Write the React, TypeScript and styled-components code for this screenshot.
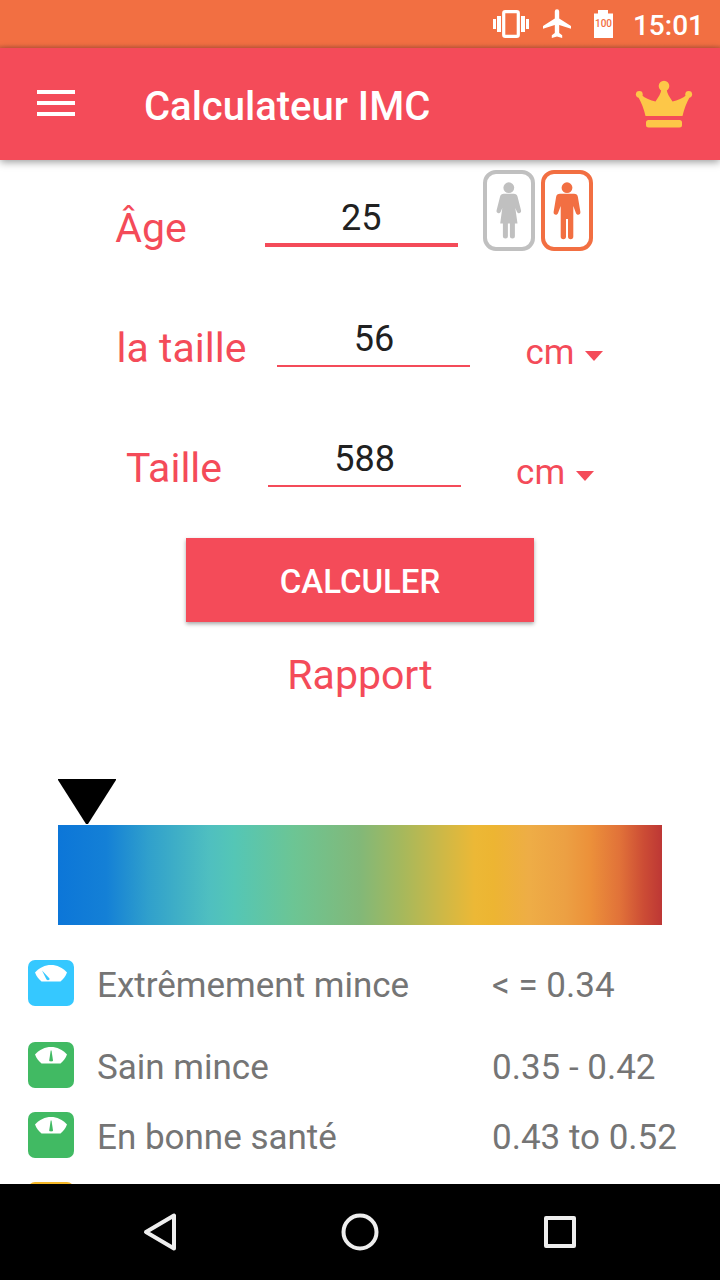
import React, { useId, useState } from "react";
import styled, { createGlobalStyle } from "styled-components";

const RED = "#f44b59";
const ORANGE = "#f26f42";
const GREY = "#c0c0c0";

const GlobalStyle = createGlobalStyle`
  * { box-sizing: border-box; }
  body { margin: 0; background: #fff; font-family: Roboto, "Noto Sans", sans-serif; }
  button, input, select { font-family: inherit; }
  svg { display: block; }
`;

const Screen = styled.div`
  display: flex;
  flex-direction: column;
  height: 100vh;
  overflow: hidden;
`;

const StatusBar = styled.div`
  display: flex;
  align-items: center;
  justify-content: flex-end;
  flex: none;
  height: 48px;
  padding-right: 16px;
  background: linear-gradient(to bottom, ${ORANGE} 92%, #d9623f 100%);
  color: #fff;
`;

const StatusIcons = styled.div`
  display: flex;
  align-items: center;
  gap: 12px;
  margin-right: 18px;
`;

const Clock = styled.time`
  font-size: 28px;
  line-height: 48px;
  font-weight: 500;
  padding-top: 4px;
`;

const AppBar = styled.header`
  position: relative;
  z-index: 1;
  display: flex;
  align-items: center;
  flex: none;
  height: 112px;
  padding: 0 27px 0 36px;
  background: ${RED};
  color: #fff;
  box-shadow: 0 2px 8px rgba(0, 0, 0, 0.4);
`;

const IconButton = styled.button`
  display: flex;
  padding: 0;
  border: 0;
  background: none;
  cursor: pointer;
`;

const AppTitle = styled.h1`
  flex: 1;
  margin: 0;
  padding: 6px 0 0 68px;
  font-size: 40px;
  line-height: 48px;
  font-weight: 500;
`;

const Content = styled.main`
  flex: 1;
  min-height: 0;
  overflow-y: auto;
  scrollbar-width: none;
`;

const Form = styled.form`
  display: flex;
  flex-direction: column;
  align-items: center;
`;

const FieldRow = styled.div<{ $shift?: number }>`
  display: flex;
  justify-content: center;
  align-items: flex-start;
  width: 100%;
  height: 120px;
  padding-right: ${(p) => p.$shift ?? 0}px;
`;

const FieldLabel = styled.label<{ $gap: number }>`
  margin: 44px ${(p) => p.$gap}px 0 0;
  font-size: 41px;
  line-height: 48px;
  color: ${RED};
`;

const NumberInput = styled.input<{ $active?: boolean }>`
  width: 193px;
  height: 54px;
  margin-top: 33px;
  padding: 0;
  border: 0;
  border-bottom: ${(p) => (p.$active ? 4 : 2)}px solid ${RED};
  border-radius: 0;
  outline: 0;
  background: none;
  color: #212121;
  font-size: 36px;
  line-height: 42px;
  text-align: center;
`;

const UnitPicker = styled.div<{ $gap: number }>`
  position: relative;
  width: 78px;
  margin: 51px 0 0 ${(p) => p.$gap}px;
`;

const UnitSelect = styled.select`
  appearance: none;
  display: block;
  width: 100%;
  height: 44px;
  padding: 0;
  border: 0;
  outline: 0;
  background: none;
  color: ${RED};
  font-size: 35px;
  line-height: 42px;
`;

const Caret = styled.svg`
  position: absolute;
  right: 0;
  top: 20px;
  pointer-events: none;
`;

const GenderGroup = styled.div`
  display: flex;
  gap: 6px;
  margin: 10px 0 0 25px;
`;

const GenderOption = styled.label<{ $selected: boolean }>`
  position: relative;
  display: flex;
  align-items: center;
  justify-content: center;
  width: 52px;
  height: 81px;
  border: 4px solid;
  border-radius: 13px;
  color: ${(p) => (p.$selected ? ORANGE : GREY)};
  cursor: pointer;
`;

const HiddenRadio = styled.input`
  position: absolute;
  inset: 0;
  margin: 0;
  opacity: 0;
`;

const SubmitButton = styled.button`
  width: 348px;
  max-width: 100%;
  height: 84px;
  margin-top: 18px;
  padding: 2px 0 0;
  border: 0;
  background: ${RED};
  color: #fff;
  font-size: 33px;
  font-weight: 500;
  text-transform: uppercase;
  box-shadow: 0 2px 4px rgba(0, 0, 0, 0.35);
  cursor: pointer;
`;

const ReportTitle = styled.h2`
  margin: 29px 0 0;
  font-size: 41px;
  line-height: 48px;
  font-weight: 400;
  color: ${RED};
  text-align: center;
`;

const Gauge = styled.div`
  margin: 80px 58px 0;
`;

const GaugeBar = styled.div`
  height: 100px;
  background: linear-gradient(
    to right,
    #0c76d8 0%,
    #1480d6 8%,
    #30a0cc 15%,
    #4fbfc0 25%,
    #54c6b6 29%,
    #6cc594 39%,
    #82b878 50%,
    #a6b85c 57%,
    #d0b845 64%,
    #ecb836 69%,
    #edb532 72%,
    #eead46 78%,
    #eca043 84%,
    #ec913a 88%,
    #e17239 93%,
    #cc4c35 97%,
    #bd3735 100%
  );
`;

const Ranges = styled.table`
  width: 100%;
  margin-top: 11px;
  border-collapse: collapse;
  table-layout: fixed;
  color: #757575;
  font-size: 35px;
  line-height: 42px;
`;

const RangeRow = styled.tr<{ $tall?: boolean }>`
  height: ${(p) => (p.$tall ? 94 : 70)}px;
`;

const IconCell = styled.td`
  width: 97px;
  padding: 0 0 0 28px;
`;

const NameCell = styled.th`
  width: 395px;
  padding: 6px 0 0;
  font-weight: 400;
  text-align: left;
`;

const ValueCell = styled.td`
  padding: 6px 0 0;
  white-space: nowrap;
`;

const NavBar = styled.nav`
  display: flex;
  align-items: center;
  justify-content: center;
  gap: 160px;
  flex: none;
  height: 96px;
  background: #000;
`;

const VibrateIcon = () => (
  <svg width="36" height="28" viewBox="0 0 36 28" fill="#fff" aria-hidden="true">
    <path d="M0 9h3v10H0zM4 6h4v16H4zM28 6h4v16h-4zM33 9h3v10h-3z" />
    <rect x="10.700" y="1.700" width="14.600" height="24.600" rx="1.600" fill="none" stroke="#fff" strokeWidth="3.200" />
  </svg>
);

const PlaneIcon = () => (
  <svg width="34" height="34" viewBox="0 0 34 34" fill="#fff" aria-hidden="true">
    <path d="M30 21.800V19L18.200 11.600V4.500a2.200 2.200 0 0 0-4.400 0v7.100L2 19v2.800l11.800-3.700V26l-3 2.200V31l5.200-1.500 5.200 1.500v-2.800l-3-2.200v-7.900z" />
  </svg>
);

const BatteryIcon = () => (
  <svg width="28" height="30" viewBox="0 0 28 30" aria-hidden="true">
    <path d="M7 4.500h4V1h10v3.500h5V29H7z" fill="#fff" />
    <text x="16.500" y="18" textAnchor="middle" fontFamily="Roboto, sans-serif" fontWeight="500" fontSize="10" fill={ORANGE}>
      100
    </text>
  </svg>
);

const MenuIcon = () => (
  <svg width="40" height="30" viewBox="0 0 40 30" fill="#fff" aria-hidden="true">
    <path d="M1 1h38v4H1zM1 12h38v4H1zM1 23h38v4H1z" />
  </svg>
);

const CrownIcon = () => (
  <svg width="58" height="48" viewBox="0 0 58 48" fill="#fdc748" aria-hidden="true">
    <circle cx="29" cy="6" r="5.300" />
    <circle cx="4.300" cy="14.300" r="3.400" />
    <circle cx="53.700" cy="14.300" r="3.400" />
    <path d="M26.500 9h5c.8 5 3 8 6 12.500 5-1 10.500-3.200 14-6.500l3.500 1.500c-3.500 6-6 13-7.500 19.500h-37C9 29.500 6.500 22.500 3 16.500L6.500 15c3.500 3.300 9 5.500 14 6.500 3-4.500 5.200-7.500 6-12.500z" />
    <rect x="11" y="40" width="36" height="7.500" rx="2.500" />
  </svg>
);

const WomanIcon = () => (
  <svg width="28" height="58" viewBox="0 0 28 58" fill="currentColor" aria-hidden="true">
    <circle cx="13.800" cy="5.700" r="5.400" />
    <path d="M8.800 11.800h10c2 0 3.200.9 3.700 2.700L26 28.300c.7 2.900-2.600 4-4 1.700L20.300 26l2.200 15.500h-2.600v12.600a2.500 2.500 0 0 1-5 0V41.500h-2v12.600a2.500 2.500 0 0 1-5 0V41.500H5.200L7.300 26 5.600 30c-1.400 2.300-4.700 1.200-4-1.700l3.500-13.800c.5-1.800 1.700-2.700 3.700-2.700z" />
  </svg>
);

const ManIcon = () => (
  <svg width="28" height="58" viewBox="0 0 28 58" fill="currentColor" aria-hidden="true">
    <circle cx="14" cy="5.700" r="5.400" />
    <path d="M7 11.700h14c2.200 0 3.600 1.200 3.900 3.200L27.400 30c.4 3-3.700 3.800-4.500.9L20.300 24v30.500a2.600 2.600 0 0 1-5.300 0V37h-2v17.500a2.600 2.600 0 0 1-5.300 0V24l-2.600 6.900c-.8 2.900-4.900 2.100-4.500-.9l2.500-15.100c.3-2 1.700-3.200 3.900-3.200z" />
  </svg>
);

const ScaleIcon = ({ color, leaning }: { color: string; leaning?: boolean }) => (
  <svg width="46" height="46" viewBox="0 0 46 46" aria-hidden="true">
    <rect width="46" height="46" rx="7" fill={color} />
    <path d="M7 12.500C11.500 7.500 17 5 23 5s11.500 2.500 16 7.500c-1.500 3.800-3.500 6.500-6.500 9h-19c-3-2.500-5-5.200-6.500-9z" fill="#fff" />
    {leaning ? (
      <path d="M14 10.500 21.500 18.500c.5 1.500-1.800 2.500-3 1z" fill={color} />
    ) : (
      <path d="M22.700 8.500h.8L25 18.500c0 1.200-3.800 1.200-3.800 0z" fill={color} />
    )}
  </svg>
);

const PointerIcon = () => (
  <svg width="58" height="46" viewBox="0 0 58 46" aria-hidden="true">
    <path d="M0 0h58v1L30 45h-2L0 1z" />
  </svg>
);

type FieldProps = {
  label: string;
  initial: string;
  labelGap: number;
  unitGap: number;
};

const MeasureField = ({ label, initial, labelGap, unitGap }: FieldProps) => {
  const id = useId();
  const [value, setValue] = useState(initial);
  return (
    <FieldRow>
      <FieldLabel htmlFor={id} $gap={labelGap}>{label}</FieldLabel>
      <NumberInput id={id} inputMode="numeric" value={value} onChange={(e) => setValue(e.target.value)} />
      <UnitPicker $gap={unitGap}>
        <UnitSelect aria-label={label}>
          <option>cm</option>
        </UnitSelect>
        <Caret width="18" height="11" viewBox="0 0 18 11" aria-hidden="true">
          <path d="M0 0h18L9 10z" fill={RED} />
        </Caret>
      </UnitPicker>
    </FieldRow>
  );
};

const ranges = [
  { name: "Extrêmement mince", value: "< = 0.34", color: "#35c8ff", leaning: true },
  { name: "Sain mince", value: "0.35 - 0.42", color: "#41ba63" },
  { name: "En bonne santé", value: "0.43 to 0.52", color: "#41ba63" },
  { name: "", value: "", color: "#f6b827" },
];

export default function App() {
  const [age, setAge] = useState("25");
  const [gender, setGender] = useState("m");

  return (
    <Screen>
      <GlobalStyle />
      <StatusBar>
        <StatusIcons>
          <VibrateIcon />
          <PlaneIcon />
          <BatteryIcon />
        </StatusIcons>
        <Clock>15:01</Clock>
      </StatusBar>
      <AppBar>
        <IconButton type="button" aria-label="Menu"><MenuIcon /></IconButton>
        <AppTitle>Calculateur IMC</AppTitle>
        <IconButton type="button" aria-label="Premium"><CrownIcon /></IconButton>
      </AppBar>
      <Content>
        <Form onSubmit={(e) => e.preventDefault()}>
          <FieldRow $shift={12}>
            <FieldLabel htmlFor="age" $gap={78}>Âge</FieldLabel>
            <NumberInput id="age" $active inputMode="numeric" value={age} onChange={(e) => setAge(e.target.value)} />
            <GenderGroup role="radiogroup">
              <GenderOption $selected={gender === "f"}>
                <HiddenRadio type="radio" name="gender" aria-label="Femme" checked={gender === "f"} onChange={() => setGender("f")} />
                <WomanIcon />
              </GenderOption>
              <GenderOption $selected={gender === "m"}>
                <HiddenRadio type="radio" name="gender" aria-label="Homme" checked={gender === "m"} onChange={() => setGender("m")} />
                <ManIcon />
              </GenderOption>
            </GenderGroup>
          </FieldRow>
          <MeasureField label="la taille" initial="56" labelGap={31} unitGap={55} />
          <MeasureField label="Taille" initial="588" labelGap={46} unitGap={55} />
          <SubmitButton type="submit">Calculer</SubmitButton>
        </Form>
        <ReportTitle>Rapport</ReportTitle>
        <Gauge>
          <PointerIcon />
          <GaugeBar />
        </Gauge>
        <Ranges>
          <tbody>
            {ranges.map((r, i) => (
              <RangeRow key={i} $tall={i === 0}>
                <IconCell><ScaleIcon color={r.color} leaning={r.leaning} /></IconCell>
                <NameCell scope="row">{r.name}</NameCell>
                <ValueCell>{r.value}</ValueCell>
              </RangeRow>
            ))}
          </tbody>
        </Ranges>
      </Content>
      <NavBar>
        <IconButton type="button" aria-label="Retour">
          <svg width="40" height="40" viewBox="0 0 40 40" fill="none" stroke="#eee" strokeWidth="4" strokeLinejoin="round" aria-hidden="true">
            <path d="M34 3.500v33L6 20z" />
          </svg>
        </IconButton>
        <IconButton type="button" aria-label="Accueil">
          <svg width="40" height="40" viewBox="0 0 40 40" fill="none" stroke="#eee" strokeWidth="4" aria-hidden="true">
            <circle cx="20" cy="20" r="16.500" />
          </svg>
        </IconButton>
        <IconButton type="button" aria-label="Applications">
          <svg width="40" height="40" viewBox="0 0 40 40" fill="none" stroke="#eee" strokeWidth="4" strokeLinejoin="round" aria-hidden="true">
            <rect x="6" y="6" width="28" height="28" />
          </svg>
        </IconButton>
      </NavBar>
    </Screen>
  );
}
